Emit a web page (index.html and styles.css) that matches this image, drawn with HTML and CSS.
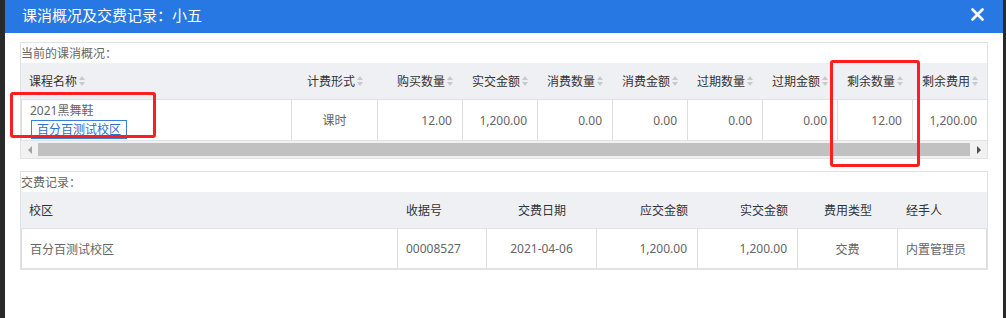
FILE: index.html
```html
<html>

<head>
    <title>课消概况</title>
    <link rel="stylesheet" href="styles.css">
</head>

<body>
    <div class="modal">
        <div class="modal-head">
            <span class="modal-title">课消概况及交费记录：小五</span>
            <svg class="close" width="13" height="13" viewBox="0 0 13 13">
                <path d="M1.5 1.5 L11.5 11.5 M11.5 1.5 L1.5 11.5" stroke="#fff" stroke-width="2.6" stroke-linecap="round" />
            </svg>
        </div>
        <div class="modal-body">
            <!-- usage -->
            <section class="panel">
                <div class="panel-label">当前的课消概况：</div>
                <div class="usage head-row">
                    <div class="cell">课程名称<i class="sort"></i></div>
                    <div class="cell center">计费形式<i class="sort"></i></div>
                    <div class="cell right">购买数量<i class="sort"></i></div>
                    <div class="cell right">实交金额<i class="sort"></i></div>
                    <div class="cell right">消费数量<i class="sort"></i></div>
                    <div class="cell right">消费金额<i class="sort"></i></div>
                    <div class="cell right">过期数量<i class="sort"></i></div>
                    <div class="cell right">过期金额<i class="sort"></i></div>
                    <div class="cell right">剩余数量<i class="sort"></i></div>
                    <div class="cell right">剩余费用<i class="sort"></i></div>
                </div>
                <div class="usage data-row">
                    <div class="cell course">
                        <span>2021黑舞鞋</span>
                        <span class="tag">百分百测试校区</span>
                    </div>
                    <div class="cell center">课时</div>
                    <div class="cell right">12.00</div>
                    <div class="cell right">1,200.00</div>
                    <div class="cell right">0.00</div>
                    <div class="cell right">0.00</div>
                    <div class="cell right">0.00</div>
                    <div class="cell right">0.00</div>
                    <div class="cell right">12.00</div>
                    <div class="cell right">1,200.00</div>
                </div>
                <div class="hscroll">
                    <span class="arrow arrow-left"></span>
                    <span class="thumb"></span>
                    <span class="arrow arrow-right"></span>
                </div>
            </section>

            <!-- payments -->
            <section class="panel payments">
                <div class="panel-label">交费记录：</div>
                <div class="pay head-row">
                    <div class="cell">校区</div>
                    <div class="cell">收据号</div>
                    <div class="cell center">交费日期</div>
                    <div class="cell right">应交金额</div>
                    <div class="cell right">实交金额</div>
                    <div class="cell center">费用类型</div>
                    <div class="cell">经手人</div>
                </div>
                <div class="pay data-row">
                    <div class="cell">百分百测试校区</div>
                    <div class="cell">00008527</div>
                    <div class="cell center">2021-04-06</div>
                    <div class="cell right">1,200.00</div>
                    <div class="cell right">1,200.00</div>
                    <div class="cell center">交费</div>
                    <div class="cell">内置管理员</div>
                </div>
            </section>
        </div>

        <!-- annotations -->
        <div class="mark mark-course"></div>
        <div class="mark mark-left"></div>
    </div>
</body>

</html>
```

FILE: styles.css
```css
* {
    box-sizing: border-box;
}

:root {
    --blue: #2778e2;
    --line: #e1e2e5;
    --head-bg: #eff0f4;
    --mark: #fd1f1f;
}

body {
    margin: 0;
    height: 318px;
    overflow: hidden;
    padding-left: 5px;
    background-color: #2a2a2a;
    font-family: "Noto Sans", "Noto Sans CJK SC", sans-serif;
    font-size: 12px;
    color: #666;
}

.modal {
    position: relative;
    width: 998px;
    height: 318px;
    background-color: #fff;
    overflow: hidden;
}

.modal-head {
    display: flex;
    align-items: center;
    justify-content: space-between;
    height: 33px;
    padding: 0 19px 5px 17px;
    background-color: var(--blue);
    color: #fff;
}

.modal-title {
    font-size: 15px;
    font-family: "Noto Sans CJK SC", sans-serif;
}

.modal-body {
    padding: 9px 15px 0;
}

.panel {
    border: 1px solid var(--line);
    overflow: hidden;
}

.payments {
    margin-top: 12px;
}

.panel-label {
    height: 20px;
    line-height: 20px;
    color: #666;
    font-family: "Noto Sans CJK SC", sans-serif;
}

.usage {
    display: grid;
    grid-template-columns: 271px 86px 85px repeat(7, 75px);
}

.pay {
    display: grid;
    grid-template-columns: 377px 89px 110px 101px 100px 100px 89px;
}

.cell {
    display: flex;
    align-items: center;
    padding: 0 8px;
    white-space: nowrap;
}

.cell.center {
    justify-content: center;
}

.cell.right {
    justify-content: flex-end;
    padding-right: 10px;
}

.head-row {
    height: 37px;
    background-color: var(--head-bg);
    border-bottom: 1px solid var(--line);
    color: #333;
}

.data-row {
    height: 41px;
    border-bottom: 1px solid var(--line);
}

.pay.data-row {
    height: 40px;
}

.data-row .cell {
    border-right: 1px solid #dedede;
}

.data-row .cell:first-child {
    border-left: 1px solid #dedede;
}

.course {
    flex-direction: column;
    align-items: flex-start;
    justify-content: center;
    padding-top: 1px;
}

.course span:first-child {
    line-height: 18px;
}

.tag {
    margin-left: 1px;
    padding: 0 5px;
    line-height: 17px;
    border: 1px solid #3d7fd8;
    color: #2d6fcf;
}

/* sort arrows */
.sort {
    display: inline-flex;
    flex-direction: column;
    gap: 2px;
    margin-left: 2px;
}

.sort::before,
.sort::after {
    content: "";
    border-left: 3.5px solid transparent;
    border-right: 3.5px solid transparent;
}

.sort::before {
    border-bottom: 4px solid #c6c9ce;
}

.sort::after {
    border-top: 4px solid #c6c9ce;
}

/* fake horizontal scrollbar */
.hscroll {
    display: flex;
    align-items: center;
    height: 17px;
    background-color: #f1f1f1;
}

.arrow {
    display: flex;
    justify-content: center;
    width: 17px;
}

.arrow::before {
    content: "";
    border-top: 4px solid transparent;
    border-bottom: 4px solid transparent;
}

.arrow-left::before {
    border-right: 4px solid #a3a3a3;
}

.arrow-right::before {
    border-left: 4px solid #505050;
}

.thumb {
    flex: 1;
    height: 13px;
    background-color: #c1c1c1;
}

/* red annotation boxes */
.mark {
    position: absolute;
    border: 3px solid var(--mark);
    border-radius: 3px;
}

.mark-course {
    left: 5px;
    top: 92px;
    width: 146px;
    height: 46px;
}

.mark-left {
    left: 825px;
    top: 60px;
    width: 90px;
    height: 107px;
}
```
